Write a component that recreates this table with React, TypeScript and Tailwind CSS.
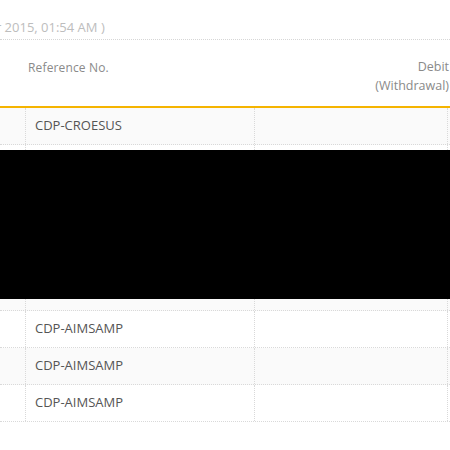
const rows = [
  { ref: "CDP-CROESUS", shade: true, h: "h-[37px]" },
  { ref: "", shade: false, h: "h-[5px]", cut: true },
];

const after = [
  { ref: "", shade: true, h: "h-[12px]" },
  { ref: "CDP-AIMSAMP", shade: false, h: "h-[37px]" },
  { ref: "CDP-AIMSAMP", shade: true, h: "h-[37px]" },
  { ref: "CDP-AIMSAMP", shade: false, h: "h-[37px]" },
];

type RowProps = { refNo: string; shade: boolean; h: string; cut?: boolean };

const Row = ({ refNo, shade, h, cut }: RowProps) => (
  <div
    className={`flex ${h} ${shade ? "bg-[#fafafa]" : "bg-white"} ${
      cut ? "" : "border-b border-dotted border-[#d9d9d9]"
    } text-[13px] text-[#555555]`}
  >
    <div className="w-[26px] shrink-0 border-r border-dotted border-[#d9d9d9]" />
    <div className="w-[229px] shrink-0 border-r border-dotted border-[#d9d9d9] pl-[9px] flex items-center">
      {refNo}
    </div>
    <div className="w-[193px] shrink-0 border-r border-dotted border-[#d9d9d9]" />
    <div className="flex-1" />
  </div>
);

export default function App() {
  return (
    <div
      className="w-[450px] h-[450px] overflow-hidden bg-white"
      style={{ fontFamily: '"Open Sans", "Noto Sans", sans-serif' }}
    >
      <div className="h-[40px] border-b border-dotted border-[#d6d6d6] pt-[14px] overflow-hidden whitespace-nowrap">
        <span className="-ml-[23px] text-[13px] leading-[18px] text-[#bdbdbd]">
          Mar 2015, 01:54 AM )
        </span>
      </div>

      <div className="flex h-[68px] border-b-2 border-[#f5b400] text-[12px] text-[#8a8a8a] leading-[19px]">
        <div className="w-[26px] shrink-0" />
        <div className="w-[229px] shrink-0 pl-[2px] pt-[18px] tracking-[0.15px]">Reference No.</div>
        <div className="w-[200px] shrink-0 pt-[17px] text-right pr-[6px] whitespace-nowrap text-[12.5px]">
          Debit
          <br />
          (Withdrawal)
        </div>
      </div>

      {rows.map((r, i) => (
        <Row key={i} refNo={r.ref} shade={r.shade} h={r.h} cut={r.cut} />
      ))}

      <div className="h-[149px] bg-black" />

      {after.map((r, i) => (
        <Row key={i} refNo={r.ref} shade={r.shade} h={r.h} />
      ))}
    </div>
  );
}
